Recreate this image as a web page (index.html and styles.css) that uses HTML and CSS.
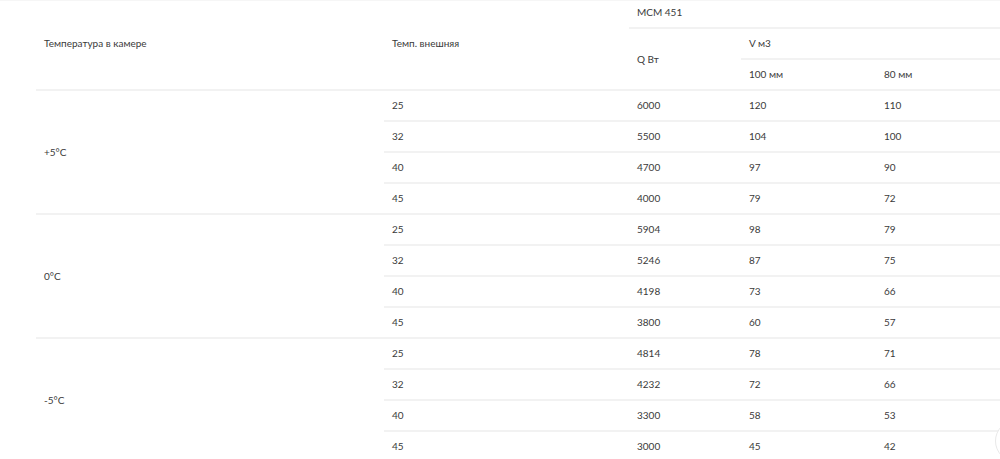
FILE: index.html
```html
<!DOCTYPE html>
<html lang="ru">
<head>
<meta charset="utf-8">
<link rel="stylesheet" href="styles.css">
</head>
<body>
<div class="wrap">
<table class="spec">
  <colgroup>
    <col class="c1"><col class="c2"><col class="c3"><col class="c4"><col class="c5">
  </colgroup>
  <thead>
    <tr class="h1">
      <th rowspan="3" class="tall">Температура в камере</th>
      <th rowspan="3" class="tall">Темп. внешняя</th>
      <th colspan="3" class="top">МСМ 451</th>
    </tr>
    <tr>
      <th rowspan="2">Q Вт</th>
      <th colspan="2">V м3</th>
    </tr>
    <tr>
      <th>100 мм</th>
      <th>80 мм</th>
    </tr>
  </thead>
  <tbody>
    <tr><td rowspan="4">+5°C</td><td>25</td><td>6000</td><td>120</td><td>110</td></tr>
    <tr><td>32</td><td>5500</td><td>104</td><td>100</td></tr>
    <tr><td>40</td><td>4700</td><td>97</td><td>90</td></tr>
    <tr><td>45</td><td>4000</td><td>79</td><td>72</td></tr>
    <tr><td rowspan="4">0°C</td><td>25</td><td>5904</td><td>98</td><td>79</td></tr>
    <tr><td>32</td><td>5246</td><td>87</td><td>75</td></tr>
    <tr><td>40</td><td>4198</td><td>73</td><td>66</td></tr>
    <tr><td>45</td><td>3800</td><td>60</td><td>57</td></tr>
    <tr><td rowspan="4">-5°C</td><td>25</td><td>4814</td><td>78</td><td>71</td></tr>
    <tr><td>32</td><td>4232</td><td>72</td><td>66</td></tr>
    <tr><td>40</td><td>3300</td><td>58</td><td>53</td></tr>
    <tr><td>45</td><td>3000</td><td>45</td><td>42</td></tr>
  </tbody>
</table>
</div>
<div class="totop"></div>
</body>
</html>
```
FILE: styles.css
```css
html, body {
  margin: 0;
  padding: 0;
  overflow: hidden;
  background: #fff;
}
body {
  font-family: Lato, "Open Sans", sans-serif;
  font-size: 10px;
  color: #3a3a3a;
}
.wrap {
  padding-left: 36px;
  border-top: 1px solid #f6f6f6;
}
.spec {
  width: 1040px;
  table-layout: fixed;
  border-collapse: separate;
  border-spacing: 0;
}
.c1 { width: 348px; }
.c2 { width: 245px; }
.c3 { width: 112px; }
.c4 { width: 135px; }
.c5 { width: 200px; }
.spec th, .spec td {
  font-weight: 400;
  text-align: left;
  vertical-align: middle;
  padding: 0 8px 1px;
  height: 28px;
  border-bottom: 2px solid #f2f2f2;
  line-height: 14px;
}
.spec .h1 th.top {
  height: 22px;
  padding-bottom: 4px;
}
.spec .h1 th.tall {
  padding-bottom: 4px;
}
.totop {
  position: fixed;
  left: 995px;
  top: 420px;
  width: 40px;
  height: 40px;
  border: 1px solid #e8e8e8;
  border-radius: 50%;
  background: #fff;
}
```
